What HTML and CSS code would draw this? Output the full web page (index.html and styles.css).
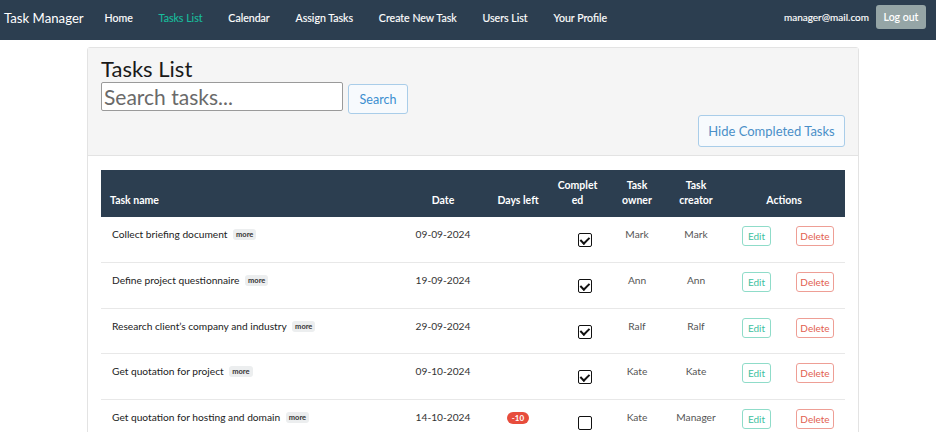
FILE: index.html
```html
<!DOCTYPE html>
<html lang="en">
<head>
<meta charset="utf-8">
<title>Task Manager</title>
<link rel="stylesheet" href="styles.css">
</head>
<body>
<nav class="navbar">
  <a class="brand" href="#">Task Manager</a>
  <ul class="nav-links">
    <li><a href="#">Home</a></li>
    <li><a class="active" href="#">Tasks List</a></li>
    <li><a href="#">Calendar</a></li>
    <li><a href="#">Assign Tasks</a></li>
    <li><a href="#">Create New Task</a></li>
    <li><a href="#">Users List</a></li>
    <li><a href="#">Your Profile</a></li>
  </ul>
  <div class="nav-user">
    <span class="email">manager@mail.com</span>
    <button class="btn-logout">Log out</button>
  </div>
</nav>

<main class="container">
  <section class="card">
    <header class="card-header">
      <h1 class="title">Tasks List</h1>
      <form class="search-row">
        <input class="search-input" type="text" placeholder="Search tasks...">
        <button class="btn-search" type="button">Search</button>
      </form>
      <div class="hide-row">
        <button class="btn-hide" type="button">Hide Completed Tasks</button>
      </div>
    </header>
    <div class="card-body">
      <table class="tasks">
        <colgroup>
          <col class="c-name"><col class="c-date"><col class="c-days"><col class="c-done"><col class="c-owner"><col class="c-creator"><col class="c-edit"><col class="c-del">
        </colgroup>
        <thead>
          <tr>
            <th class="left">Task name</th>
            <th>Date</th>
            <th>Days left</th>
            <th class="break">Completed</th>
            <th>Task owner</th>
            <th>Task creator</th>
            <th colspan="2">Actions</th>
          </tr>
        </thead>
        <tbody>
          <tr>
            <td class="left">Collect briefing document <span class="badge-more">more</span></td>
            <td class="date">09-09-2024</td>
            <td></td>
            <td><span class="check checked"></span></td>
            <td class="person">Mark</td>
            <td class="person">Mark</td>
            <td><button class="btn-edit">Edit</button></td>
            <td class="del"><button class="btn-del">Delete</button></td>
          </tr>
          <tr>
            <td class="left">Define project questionnaire <span class="badge-more">more</span></td>
            <td class="date">19-09-2024</td>
            <td></td>
            <td><span class="check checked"></span></td>
            <td class="person">Ann</td>
            <td class="person">Ann</td>
            <td><button class="btn-edit">Edit</button></td>
            <td class="del"><button class="btn-del">Delete</button></td>
          </tr>
          <tr>
            <td class="left">Research client’s company and industry <span class="badge-more">more</span></td>
            <td class="date">29-09-2024</td>
            <td></td>
            <td><span class="check checked"></span></td>
            <td class="person">Ralf</td>
            <td class="person">Ralf</td>
            <td><button class="btn-edit">Edit</button></td>
            <td class="del"><button class="btn-del">Delete</button></td>
          </tr>
          <tr>
            <td class="left">Get quotation for project <span class="badge-more">more</span></td>
            <td class="date">09-10-2024</td>
            <td></td>
            <td><span class="check checked"></span></td>
            <td class="person">Kate</td>
            <td class="person">Kate</td>
            <td><button class="btn-edit">Edit</button></td>
            <td class="del"><button class="btn-del">Delete</button></td>
          </tr>
          <tr>
            <td class="left">Get quotation for hosting and domain <span class="badge-more">more</span></td>
            <td class="date">14-10-2024</td>
            <td><span class="badge-days">-10</span></td>
            <td><span class="check"></span></td>
            <td class="person">Kate</td>
            <td class="person">Manager</td>
            <td><button class="btn-edit">Edit</button></td>
            <td class="del"><button class="btn-del">Delete</button></td>
          </tr>
        </tbody>
      </table>
    </div>
  </section>
</main>
</body>
</html>
```
FILE: styles.css
```css
* { box-sizing: border-box; }

body {
  margin: 0;
  font-family: Lato, "Open Sans", sans-serif;
  color: #2b2b2b;
  background: #fff;
}

.navbar {
  height: 40px;
  background: #2c3e50;
  display: flex;
  align-items: center;
  padding: 0 10px 0 4px;
}

.brand {
  color: #fff;
  text-decoration: none;
  font-size: 13.2px;
  margin-right: 8px;
  position: relative;
  top: -2px;
}

.nav-links {
  list-style: none;
  margin: 0;
  padding: 0;
  display: flex;
  flex: 1;
  position: relative;
  top: -2px;
}

.nav-links a {
  display: block;
  color: #fff;
  text-decoration: none;
  font-size: 10.6px;
  font-weight: 400;
  padding: 0 12.9px;
  -webkit-text-stroke: 0.15px #fff;
}

.nav-links a.active {
  color: #18bc9c;
  -webkit-text-stroke: 0.15px #18bc9c;
}

.nav-user {
  display: flex;
  align-items: center;
  gap: 7px;
  position: relative;
  top: -3px;
}

.email {
  color: #fff;
  font-size: 10px;
  -webkit-text-stroke: 0.15px #fff;
}

.btn-logout {
  background: #95a5a6;
  color: #fff;
  border: none;
  border-radius: 3px;
  font-family: inherit;
  font-size: 10.5px;
  font-weight: 600;
  height: 24px;
  width: 50px;
  padding: 0;
}

.container {
  padding: 7px 77px 0 87px;
}

.card {
  border: 1px solid #e3e3e3;
  border-radius: 3px;
}

.card-header {
  background: #f5f5f5;
  border-bottom: 1px solid #e3e3e3;
  padding: 8px 13px 8px 13px;
}

.title {
  margin: 0;
  font-size: 22px;
  font-weight: 400;
  line-height: 26px;
  color: #1a1a1a;
}

.search-row {
  display: flex;
  align-items: flex-start;
  gap: 5px;
  margin: 0;
}

.search-input {
  width: 242px;
  height: 29px;
  border: 1px solid #9a9a9a;
  border-radius: 2px;
  font-family: inherit;
  font-size: 21px;
  padding: 0 2px;
  color: #333;
  background: #fff;
}

.search-input::placeholder { color: #6a6a6a; }

.btn-search {
  margin-top: 2px;
  height: 30px;
  width: 60px;
  background: #f7fafd;
  border: 1px solid #a9cde9;
  border-radius: 3px;
  color: #3b8fd0;
  font-family: inherit;
  font-size: 12.5px;
  padding: 0;
}

.hide-row {
  display: flex;
  justify-content: flex-end;
  margin-top: 1px;
}

.btn-hide {
  height: 32px;
  width: 147px;
  background: #f7fafd;
  border: 1px solid #a9cde9;
  border-radius: 3px;
  color: #4a8fc8;
  font-family: inherit;
  font-size: 13px;
  padding: 0;
}

.card-body {
  padding: 14px 13px 14px 13px;
}

.tasks {
  width: 744px;
  border-collapse: collapse;
  table-layout: fixed;
  font-size: 10.2px;
}

.c-name { width: 299px; }
.c-date { width: 86px; }
.c-days { width: 64px; }
.c-done { width: 55px; }
.c-owner { width: 64px; }
.c-creator { width: 54px; }
.c-edit { width: 67px; }
.c-del { width: 55px; }

.tasks thead tr {
  background: #2c3e50;
  color: #fff;
}

.tasks th {
  height: 47px;
  vertical-align: bottom;
  padding: 0 7px 9px;
  font-weight: 700;
  font-size: 10.5px;
  line-height: 15px;
  text-align: center;
}

.tasks th.left { text-align: left; padding-left: 9px; }
.tasks th.break { word-break: break-all; padding: 0 7px 9px; }

.tasks td {
  height: 45.5px;
  vertical-align: top;
  padding: 9px 2px 0;
  text-align: center;
  border-top: 1px solid #e8e8e8;
  line-height: 16px;
  color: #333;
}

.tasks tbody tr:first-child td { border-top: none; }

.tasks td.left { text-align: left; padding-left: 11px; color: #222; }
.tasks td.date { color: #333; }
.tasks td.person { color: #555; }
.tasks td.del { padding-right: 7px; }

.badge-more {
  display: inline-block;
  background: #eceeef;
  color: #333;
  font-size: 7.5px;
  font-weight: 700;
  line-height: 11px;
  padding: 0 3px;
  border-radius: 3px;
  margin-left: 3px;
  vertical-align: 1px;
}

.badge-days {
  display: inline-block;
  background: #e74c3c;
  color: #fff;
  font-size: 8px;
  font-weight: 700;
  line-height: 12px;
  padding: 0 5px;
  border-radius: 6px;
  margin-top: 2px;
}

.check {
  display: inline-block;
  width: 14px;
  height: 14px;
  border: 1.5px solid #111;
  border-radius: 2px;
  margin-top: 7px;
  margin-left: 14px;
  position: relative;
  background: #fff;
}

.check.checked::after {
  content: "";
  position: absolute;
  left: 3.5px;
  top: 0.5px;
  width: 3.5px;
  height: 7px;
  border: solid #111;
  border-width: 0 2px 2px 0;
  transform: rotate(45deg);
}

.btn-edit,
.btn-del {
  height: 20px;
  background: #fff;
  border-radius: 3px;
  font-family: inherit;
  font-size: 10px;
  padding: 0;
}

.btn-edit {
  width: 29px;
  border: 1px solid #8fdcc9;
  color: #3fbf9f;
}

.btn-del {
  width: 38px;
  border: 1px solid #ee9e95;
  color: #e2604f;
}
```
